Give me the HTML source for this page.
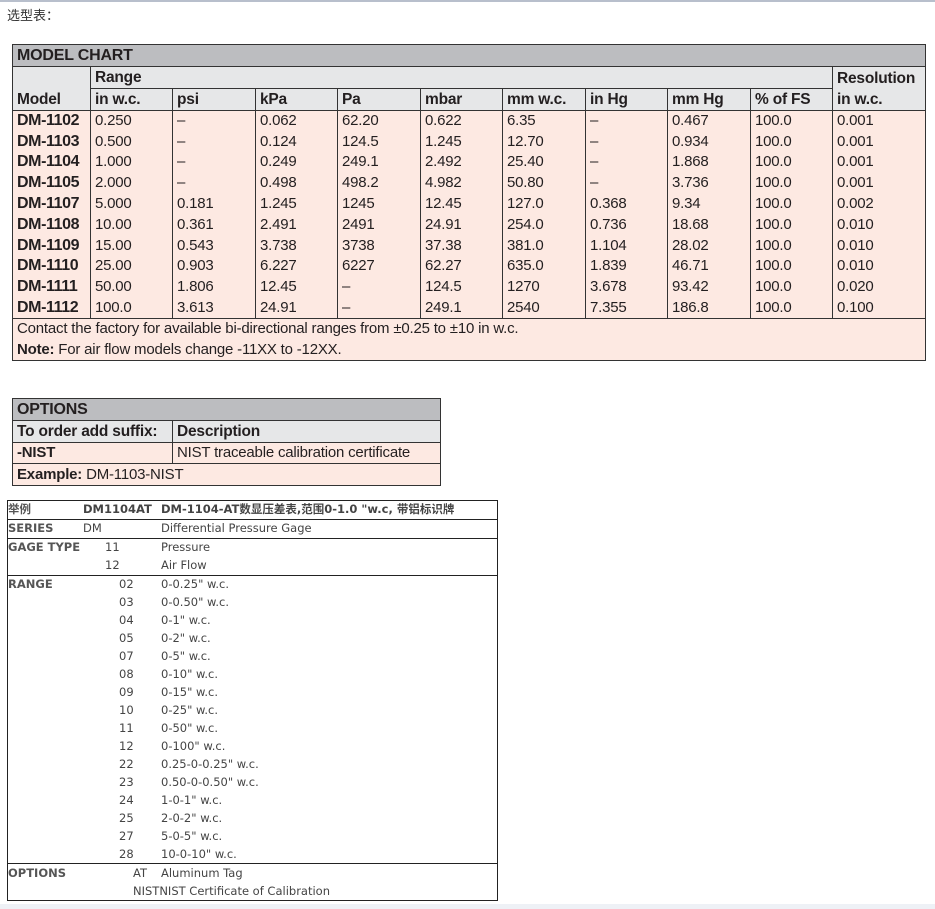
<!DOCTYPE html>
<html><head><meta charset="utf-8"><style>
*{margin:0;padding:0;box-sizing:border-box}
body{width:935px;height:909px;background:#fff;position:relative;overflow:hidden;font-family:"Liberation Sans",Arial,sans-serif;color:#231f20}
.a{position:absolute}
table{border-collapse:collapse;table-layout:fixed;position:absolute}
td{font-size:15px;padding:0 0 0 4px;white-space:nowrap;overflow:hidden;line-height:20px;letter-spacing:-0.2px}
.mc td{border-left:1px solid #333;border-right:1px solid #333}
.t{background:#bcbdc0;font-weight:bold;border:1px solid #333!important;height:22px;font-size:16px}
.h{background:#e6e7e8;font-weight:bold;font-size:15.5px;height:22px;vertical-align:bottom}
.d td{background:#fde9e2;height:20.8px;line-height:20px}
.d td:first-child{font-weight:bold;font-size:16px;letter-spacing:-0.4px}
.f td{background:#fde9e2;height:21px;border-top:1px solid #333}
.bt{font-family:"DejaVu Sans","Noto Sans CJK SC",sans-serif;font-size:11.5px;color:#444;line-height:18px;height:18px;white-space:nowrap}
.b{font-weight:bold;color:#555}
.hl{position:absolute;left:7px;width:491px;height:1px;background:#222}
</style></head><body>
<div class="a" style="left:0;top:0;width:935px;height:2px;background:#b8bfcc"></div>
<div class="a" style="left:7px;top:5px;font-family:'Noto Sans CJK SC',sans-serif;font-size:13px;color:#333">选型表：</div>

<table class="mc" style="left:12px;top:44px;width:913px">
<colgroup><col style="width:78px"><col style="width:82px"><col style="width:83px"><col style="width:82px"><col style="width:83px"><col style="width:82px"><col style="width:83px"><col style="width:82px"><col style="width:83px"><col style="width:82px"><col style="width:93px"></colgroup>
<tr><td class="t" colspan="11">MODEL CHART</td></tr>
<tr><td class="h" rowspan="2" style="border-bottom:1px solid #333">Model</td><td class="h" colspan="9" style="border-bottom:1px solid #333">Range</td><td class="h" style="border-bottom:0">Resolution</td></tr>
<tr class="hu"><td class="h">in w.c.</td><td class="h">psi</td><td class="h">kPa</td><td class="h">Pa</td><td class="h">mbar</td><td class="h">mm w.c.</td><td class="h">in Hg</td><td class="h">mm Hg</td><td class="h">% of FS</td><td class="h" style="border-top:0">in w.c.</td></tr>
<tr class="d" style="border-top:1px solid #333"><td>DM-1102</td><td>0.250</td><td>–</td><td>0.062</td><td>62.20</td><td>0.622</td><td>6.35</td><td>–</td><td>0.467</td><td>100.0</td><td>0.001</td></tr>
<tr class="d"><td>DM-1103</td><td>0.500</td><td>–</td><td>0.124</td><td>124.5</td><td>1.245</td><td>12.70</td><td>–</td><td>0.934</td><td>100.0</td><td>0.001</td></tr>
<tr class="d"><td>DM-1104</td><td>1.000</td><td>–</td><td>0.249</td><td>249.1</td><td>2.492</td><td>25.40</td><td>–</td><td>1.868</td><td>100.0</td><td>0.001</td></tr>
<tr class="d"><td>DM-1105</td><td>2.000</td><td>–</td><td>0.498</td><td>498.2</td><td>4.982</td><td>50.80</td><td>–</td><td>3.736</td><td>100.0</td><td>0.001</td></tr>
<tr class="d"><td>DM-1107</td><td>5.000</td><td>0.181</td><td>1.245</td><td>1245</td><td>12.45</td><td>127.0</td><td>0.368</td><td>9.34</td><td>100.0</td><td>0.002</td></tr>
<tr class="d"><td>DM-1108</td><td>10.00</td><td>0.361</td><td>2.491</td><td>2491</td><td>24.91</td><td>254.0</td><td>0.736</td><td>18.68</td><td>100.0</td><td>0.010</td></tr>
<tr class="d"><td>DM-1109</td><td>15.00</td><td>0.543</td><td>3.738</td><td>3738</td><td>37.38</td><td>381.0</td><td>1.104</td><td>28.02</td><td>100.0</td><td>0.010</td></tr>
<tr class="d"><td>DM-1110</td><td>25.00</td><td>0.903</td><td>6.227</td><td>6227</td><td>62.27</td><td>635.0</td><td>1.839</td><td>46.71</td><td>100.0</td><td>0.010</td></tr>
<tr class="d"><td>DM-1111</td><td>50.00</td><td>1.806</td><td>12.45</td><td>–</td><td>124.5</td><td>1270</td><td>3.678</td><td>93.42</td><td>100.0</td><td>0.020</td></tr>
<tr class="d"><td>DM-1112</td><td>100.0</td><td>3.613</td><td>24.91</td><td>–</td><td>249.1</td><td>2540</td><td>7.355</td><td>186.8</td><td>100.0</td><td>0.100</td></tr>
<tr class="f"><td colspan="11">Contact the factory for available bi-directional ranges from ±0.25 to ±10 in w.c.</td></tr>
<tr class="f" style="border-bottom:1px solid #333"><td colspan="11" style="border-top:0"><b>Note:</b> For air flow models change -11XX to -12XX.</td></tr>
</table>

<table class="mc" style="left:12px;top:398px;width:428px">
<colgroup><col style="width:160px"><col style="width:268px"></colgroup>
<tr><td class="t" colspan="2">OPTIONS</td></tr>
<tr><td class="h" style="border:1px solid #333">To order add suffix:</td><td class="h" style="border:1px solid #333">Description</td></tr>
<tr class="f"><td style="font-weight:bold;height:21px">-NIST</td><td>NIST traceable calibration certificate</td></tr>
<tr class="f" style="border-bottom:1px solid #333"><td colspan="2" style="height:22px"><b>Example:</b> DM-1103-NIST</td></tr>
</table>

<div class="a" style="left:7px;top:500px;width:491px;height:401px;border:1px solid #222"></div>
<div class="hl" style="top:519px"></div>
<div class="hl" style="top:538px"></div>
<div class="hl" style="top:575px"></div>
<div class="hl" style="top:863px"></div>

<div class="a bt b" style="left:8px;top:500px;font-family:'DejaVu Sans','Noto Sans CJK SC',sans-serif">举例</div>
<div class="a bt b" style="left:83px;top:500px;color:#444">DM1104AT</div>
<div class="a bt b" style="left:161px;top:500px;color:#444">DM-1104-AT数显压差表,范围0-1.0 "w.c, 带铝标识牌</div>

<div class="a bt b" style="left:8px;top:519px">SERIES</div>
<div class="a bt" style="left:83px;top:519px">DM</div>
<div class="a bt" style="left:161px;top:519px">Differential Pressure Gage</div>

<div class="a bt b" style="left:8px;top:538px">GAGE TYPE</div>
<div class="a bt" style="left:105px;top:538px">11</div>
<div class="a bt" style="left:161px;top:538px">Pressure</div>
<div class="a bt" style="left:105px;top:556px">12</div>
<div class="a bt" style="left:161px;top:556px">Air Flow</div>

<div class="a bt b" style="left:8px;top:575px">RANGE</div>
<div class="a bt" style="left:119px;top:575px">02<br>03<br>04<br>05<br>07<br>08<br>09<br>10<br>11<br>12<br>22<br>23<br>24<br>25<br>27<br>28</div>
<div class="a bt" style="left:161px;top:575px;height:auto">0-0.25" w.c.<br>0-0.50" w.c.<br>0-1" w.c.<br>0-2" w.c.<br>0-5" w.c.<br>0-10" w.c.<br>0-15" w.c.<br>0-25" w.c.<br>0-50" w.c.<br>0-100" w.c.<br>0.25-0-0.25" w.c.<br>0.50-0-0.50" w.c.<br>1-0-1" w.c.<br>2-0-2" w.c.<br>5-0-5" w.c.<br>10-0-10" w.c.</div>

<div class="a bt b" style="left:8px;top:864px">OPTIONS</div>
<div class="a bt" style="left:133px;top:864px">AT</div>
<div class="a bt" style="left:161px;top:864px">Aluminum Tag</div>
<div class="a bt" style="left:133px;top:882px">NISTNIST Certificate of Calibration</div>

<div class="a" style="left:0;top:904px;width:935px;height:5px;background:#eef1f6"></div>
</body></html>
